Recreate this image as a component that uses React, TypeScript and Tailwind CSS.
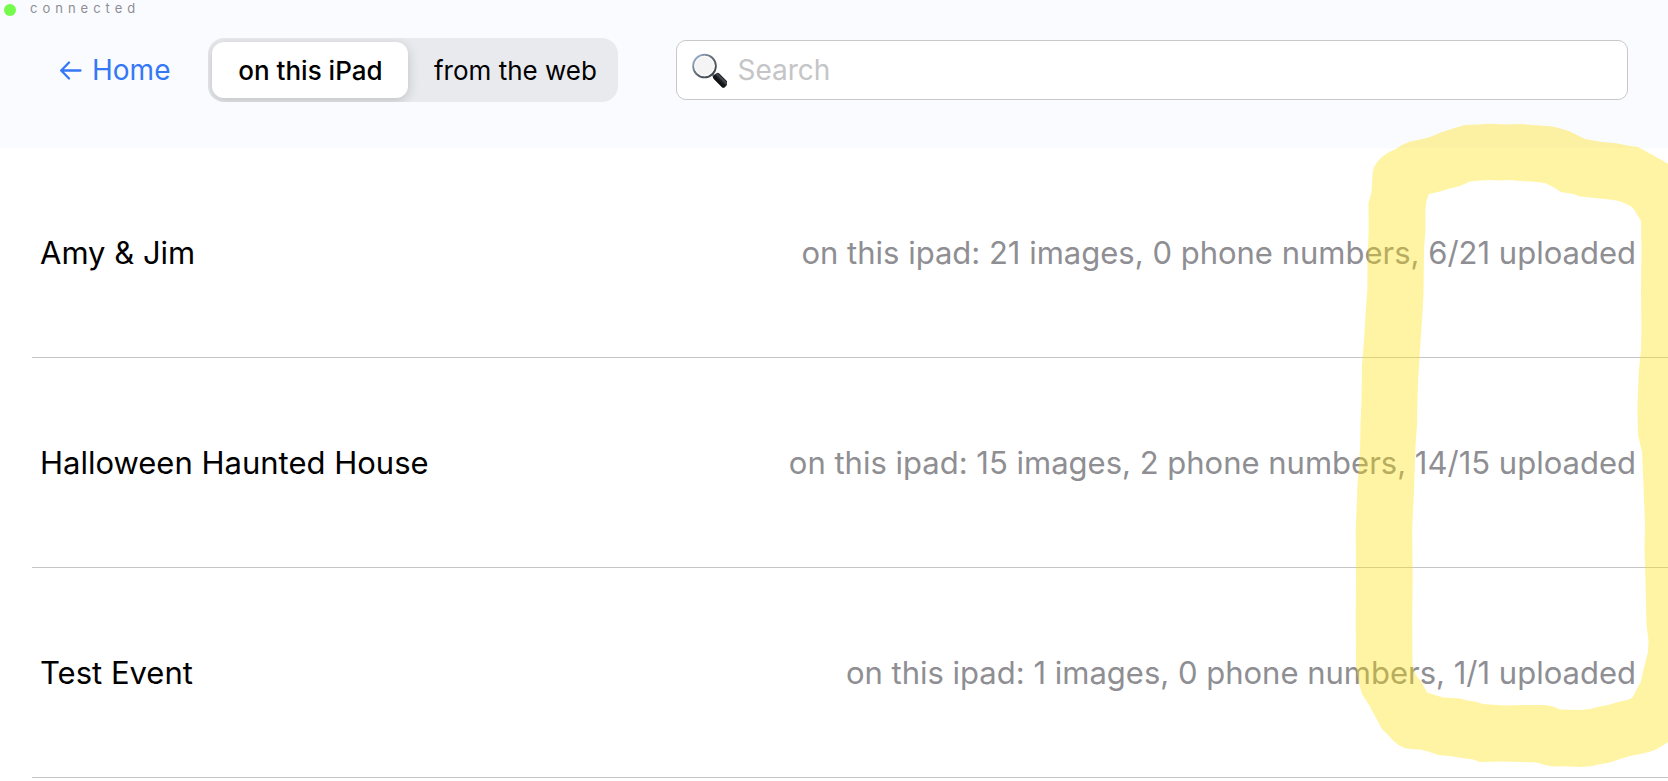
import { useState } from 'react';

const events = [
    { name: 'Amy & Jim', images: 21, phones: 0, uploaded: 6 },
    { name: 'Halloween Haunted House', images: 15, phones: 2, uploaded: 14 },
    { name: 'Test Event', images: 1, phones: 0, uploaded: 1 },
];

const tabs = ['on this iPad', 'from the web'];

function BackArrow() {
    return (
        <svg viewBox="0 0 22 20" className="w-[22px] h-5" fill="none" stroke="currentColor" strokeWidth="2.3" strokeLinecap="round" strokeLinejoin="round" aria-hidden="true">
            <path d="M20.5 10.500H1.5M9 2.500L1.2 10.500L9 18.500" />
        </svg>
    );
}

function Magnifier() {
    return (
        <svg viewBox="0 0 36 36" className="w-9 h-9" aria-hidden="true">
            <defs>
                <linearGradient id="rim" x1="0" y1="0" x2="1" y2="1">
                    <stop offset="0" stopColor="#a9c4e6" />
                    <stop offset="0.4" stopColor="#6d7682" />
                    <stop offset="1" stopColor="#33383e" />
                </linearGradient>
                <linearGradient id="grip" x1="0" y1="1" x2="0" y2="0">
                    <stop offset="0" stopColor="#08090a" />
                    <stop offset="0.5" stopColor="#1c1f22" />
                    <stop offset="0.75" stopColor="#4a4f55" />
                    <stop offset="1" stopColor="#15171a" />
                </linearGradient>
            </defs>
            <path d="M20.5 21.500L25 26" stroke="#777d84" strokeWidth="3" />
            <rect x="21.500" y="24.300" width="16" height="7.800" rx="2.400" fill="url(#grip)" transform="rotate(45 29.5 28.2)" />
            <circle cx="13.500" cy="14" r="11.300" fill="#f4f4f5" stroke="url(#rim)" strokeWidth="2" />
            <circle cx="13.500" cy="14" r="9.800" fill="none" stroke="#ffffff" strokeWidth="0.8" />
        </svg>
    );
}

// marker stroke around the upload counts
function Highlight() {
    return (
        <svg viewBox="0 0 328 681" className="absolute right-0 top-[100px] w-[328px] h-[681px] pointer-events-none" aria-hidden="true">
            <path
                fill="#ffe205"
                fillOpacity="0.37"
                fillRule="evenodd"
                d="M330 65L318 58L307 52L298 47L290 46L275 43L262 42L245 39L237 35L229 31L220 28.500L213 26.500L200 25.500L180 24L165 24.500L150 23.700L138 24.500L125 25L113 28.500L102 32L90 37L78 40L70 41.500L62 45L55 49.500C42 54 34 64 32.700 72L31.500 92L28.500 103L28.700 130L27.500 160L27.300 190L25.500 215L24 240L22 265L21.500 300L20.500 325L20 350L17.500 385L16.500 410L15.700 430L16 480L15.700 520L16 565L18 580L22 594L29 605L36 618L42 629L48 635C55 643 61 648 70 649L80 649.500L90 652L98 655L110 656L122 658L133 659.500L140 662L160 661.500L180 662L197 662.500L205 665L213 666.500L225 666.200L240 667L253 666L260 664L268 663L280 659L290 656L305 653L315 650L322 646L330 641Z
                M89 94L100 91.500L108 89L120 86L130 81.500L140 80.500L150 80L160 80.500L170 80L180 81L192 81.500L205 83L213 87L221 92L233 94L240 96.500L255 98L270 99.500L279 101C288 104 293 107 295 111L301 121L301.500 150L301 190L301.500 230L301 250L299 269L298 290L297.500 310L298 335L302 352L303.500 385L305 425L304.500 450L305.500 480L306.500 525L308.500 541L308 552L305.500 562L303 571L301 581L296 591L292 598L287 600L278 602L268 605L260 606.500L250 609L240 610L220 609.500L213 606.500L205 605L180 605L165 605.500L150 604.500L143 604L135 601.500L127 600.500L120 598.500L103 597.500L87 592.500L82 583L76 575L72.500 566L72.200 520L72.700 480L72.200 430L74 390L75.500 345L77 325L77.500 300L78.200 280L80 250L82 220L83.500 195L84 150L85.500 130L85.300 110L86.500 100Z"
            />
        </svg>
    );
}

export default function App() {
    const [active, setActive] = useState(tabs[0]);

    return (
        <div className="relative overflow-hidden bg-white font-[Inter,sans-serif] text-black">
            <header className="bg-[#fafbff] pb-[46px]">
                <div className="flex items-start gap-[14px] h-[18px] pl-1 mb-5">
                    <span className="w-3 h-3 mt-1 rounded-full bg-[#75fb4c]" />
                    <span className="text-[13px] leading-4 tracking-[5px] text-[#8e8e93]">connected</span>
                </div>
                <div className="flex items-center pl-[60px] pr-10">
                    <a href="#home" className="flex items-center gap-[10px] mr-[38px] text-[28px] leading-8 text-[#3478f6]">
                        <BackArrow />
                        Home
                    </a>
                    <div className="flex h-16 p-1 mr-[58px] rounded-2xl bg-[#e9eaee] overflow-hidden">
                        {tabs.map((tab) => (
                            <button
                                key={tab}
                                type="button"
                                aria-pressed={tab === active}
                                onClick={() => setActive(tab)}
                                className={
                                    tab === active
                                        ? 'w-[196px] rounded-xl bg-white text-[26px] font-medium shadow-[0_3px_12px_rgba(0,0,0,0.18)]'
                                        : 'w-[206px] pl-2 rounded-xl text-[26px]'
                                }
                            >
                                {tab}
                            </button>
                        ))}
                    </div>
                    <label className="flex flex-1 items-center gap-[10px] h-[60px] pl-[14px] rounded-[10px] border border-[#c8c8ca] bg-white">
                        <Magnifier />
                        <input
                            type="text"
                            aria-label="Search"
                            placeholder="Search"
                            className="flex-1 min-w-0 bg-transparent text-[28px] leading-8 outline-none placeholder:text-[#c5c5c7]"
                        />
                    </label>
                </div>
            </header>

            <ul className="pl-8">
                {events.map((e) => (
                    <li key={e.name} className="flex items-center justify-between h-[210px] pl-2 pr-8 border-b border-[#c6c6c8]">
                        <span className="text-[31px] leading-10">{e.name}</span>
                        <span className="text-[31px] leading-10 text-[#8e8e93]">
                            on this ipad: {e.images} images, {e.phones} phone numbers, {e.uploaded}/{e.images} uploaded
                        </span>
                    </li>
                ))}
            </ul>

            <Highlight />
        </div>
    );
}
